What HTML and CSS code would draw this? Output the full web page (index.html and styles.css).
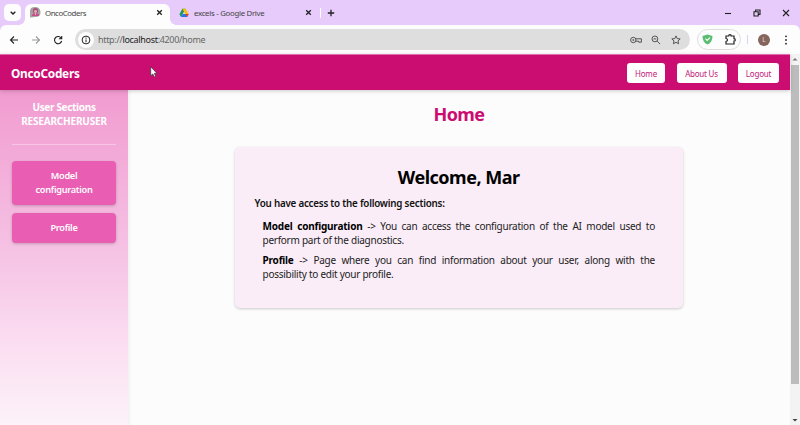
FILE: index.html
```html
<!DOCTYPE html>
<html lang="en">
<head>
<meta charset="utf-8">
<title>OncoCoders</title>
<link rel="stylesheet" href="styles.css">
</head>
<body>
<div class="tabs">
  <div class="chevron"><svg width="8" height="8" viewBox="0 0 8 8"><path d="M1.7 2.8 4 5l2.3-2.2"/></svg></div>
  <div class="tab active">
    <svg class="favicon" width="11" height="11" viewBox="0 0 11 11"><path d="M0 10.5V4Q0 0 5 0t5.500 5-5.500 5z" fill="#a9a0a6"/><circle cx="5.500" cy="3.700" r="2.600" fill="#a84f78"/><circle cx="5.500" cy="4.500" r="1.400" fill="#e0b5b5"/><path d="M2 9q0-3 3.500-3T9 9z" fill="#c64e84"/><path d="m4.500 6.500 1 1.500 1-1.500" fill="#eee"/></svg>
    <span class="tab-title t-onco">OncoCoders</span>
    <svg class="close" width="7" height="7" viewBox="0 0 7 7"><path d="m1.200 1.200 4.600 4.600m0-4.600L1.200 5.800"/></svg>
  </div>
  <div class="tab">
    <svg width="10" height="10" viewBox="0 0 10 10"><path d="M3.400.8h3.200L5 3.600 2 9 .4 6.200z" fill="#179d55"/><path d="M3.400.8h3.200L9.700 6H6.500z" fill="#fbbc05"/><path d="M3.600 6h6.100L8.100 9H2z" fill="#2c75e8"/><path d="M6.500 6h3.200L8.100 9z" fill="#e84335"/></svg>
    <span class="tab-title t-drive">excels - Google Drive</span>
    <svg class="close" width="7" height="7" viewBox="0 0 7 7"><path d="m1.200 1.200 4.600 4.600m0-4.600L1.200 5.800"/></svg>
  </div>
  <i class="divider"></i>
  <svg class="plus" width="8" height="8" viewBox="0 0 8 8"><path d="M4 .8v6.400M.8 4h6.400"/></svg>
  <div class="window-controls">
    <svg width="8" height="8" viewBox="0 0 8 8"><path d="M1 4.500h6"/></svg>
    <svg width="8" height="8" viewBox="0 0 8 8"><path d="M1 2.800h4.200V7H1zM2.600 2.800V1h4.400v4.400H5.200"/></svg>
    <svg width="8" height="8" viewBox="0 0 8 8"><path d="m1 1 6 6m0-6L1 7"/></svg>
  </div>
</div>
<div class="toolbar">
  <svg width="10" height="10" viewBox="0 0 10 10"><path d="M9 5H1.500M5 1.500 1.500 5 5 8.500"/></svg>
  <svg class="forward" width="10" height="10" viewBox="0 0 10 10"><path d="M1 5h7.500M5 1.500 8.500 5 5 8.500"/></svg>
  <svg width="10" height="10" viewBox="0 0 10 10"><path d="M8.300 3.400A3.600 3.600 0 1 0 8.600 6M8.700 1v2.800H5.900"/></svg>
  <div class="address">
    <span class="info"><svg width="10" height="10" viewBox="0 0 10 10"><circle cx="5" cy="5" r="3.900"/><path d="M5 4.500v2.700M5 2.600v1.100"/></svg></span>
    <span class="url">http://<b>localhost</b>:4200/home</span>
    <svg class="key" width="12" height="10" viewBox="0 0 12 10"><circle cx="3.300" cy="5" r="2.700"/><circle cx="3.300" cy="5" r=".6"/><path d="M5.700 3.800h5.700v3.400H8.700V6.200H5.700"/></svg>
    <svg width="10" height="10" viewBox="0 0 10 10"><circle cx="3.900" cy="3.900" r="2.900"/><path d="m6.100 6.100 3 3M2.500 3.900h2.800"/></svg>
    <svg width="10" height="10" viewBox="0 0 10 10"><path d="m5 .9 1.200 2.700 3 .3-2.200 2 .6 2.900L5 7.300 2.400 8.800 3 5.900l-2.200-2 3-.3z"/></svg>
  </div>
  <div class="extensions">
    <svg width="11" height="11" viewBox="0 0 11 11"><path d="M5.500.5 10.500 2c0 4-1.500 7-5 8.600C2 9 .5 6 .5 2z" fill="#5bbd72" stroke="none"/><path d="m3.500 4.700 1.600 1.700L8 3.700" stroke="#fff"/></svg>
    <svg width="11" height="11" viewBox="0 0 11 11"><path d="M1 2h2.700q0-1.300 1.200-1.300T6.100 2H9v2.700q1.300 0 1.300 1.200T9 7.100V10H1V7.500q1.500-.3 1.500-1.500T1 4.500z" stroke-width="1.200"/></svg>
  </div>
  <i class="bar"></i>
  <span class="avatar">L</span>
  <svg class="dots" width="4" height="10" viewBox="0 0 4 10"><circle cx="2" cy="1.300" r=".9"/><circle cx="2" cy="5" r=".9"/><circle cx="2" cy="8.700" r=".9"/></svg>
</div>
<div class="viewport">
  <div class="page">
    <header class="header">
      <span class="brand">OncoCoders</span>
      <nav class="nav"><a class="home">Home</a><a class="about">About Us</a><a class="logout">Logout</a></nav>
    </header>
    <div class="body">
      <aside class="sidebar">
        <h2>User Sections<br><span class="role">RESEARCHERUSER</span></h2>
        <a class="side-link">Model<br>configuration</a>
        <a class="side-link">Profile</a>
      </aside>
      <main class="main">
        <h1>Home</h1>
        <section class="card">
          <h2>Welcome, Mar</h2>
          <h3>You have access to the following sections:</h3>
          <p><strong>Model configuration</strong> -&gt; You can access the configuration of the AI model used to perform part of the diagnostics.</p>
          <p><strong>Profile</strong> -&gt; Page where you can find information about your user, along with the possibility to edit your profile.</p>
        </section>
      </main>
    </div>
  </div>
  <div class="scrollbar">
    <svg width="10" height="10" viewBox="0 0 10 10"><path d="m2.500 6.500L5 4l2.500 2.500z" fill="#777"/></svg>
    <div class="thumb"></div>
    <svg width="10" height="10" viewBox="0 0 10 10"><path d="M2.500 4 5 6.500 7.500 4z" fill="#444"/></svg>
  </div>
</div>
<svg class="cursor" width="8" height="12" viewBox="0 0 8 12"><path d="M.7.700v9L2.800 8l1.400 3 1.500-.7L4.300 7.400H7z"/></svg>
</body>
</html>
```
FILE: styles.css
```css
* { box-sizing: border-box; }
body {
  margin: 0;
  width: 800px;
  height: 425px;
  overflow: hidden;
  display: flex;
  flex-direction: column;
  font-family: "Noto Sans", "Open Sans", sans-serif;
  background: #e6cbfb;
  color: #111;
}
svg { flex: none; display: block; fill: none; stroke: #222; stroke-width: 1.1; }
.tabs { height: 25px; display: flex; align-items: center; flex: none; }
.chevron {
  width: 17px; height: 17px; margin-left: 4px; border-radius: 5px;
  background: #fdfdfd; display: grid; place-items: center;
}
.chevron svg { stroke-width: 1.4; }
.tab { display: flex; align-items: center; width: 150px; padding: 0 8px 0 9px; height: 21px; }
.tab svg:first-child { stroke: none; }
.tab.active {
  margin: 4px 0 0 4px; width: 145px; padding: 0 7px 4px 5px;
  background: #fdfdfd; border-radius: 6px 6px 0 0; position: relative;
}
.tab.active::before, .tab.active::after {
  content: ""; position: absolute; bottom: 0; width: 6px; height: 6px;
}
.tab.active::before { left: -6px; background: radial-gradient(circle at 0 0, transparent 5.500px, #fdfdfd 6px); }
.tab.active::after { right: -6px; background: radial-gradient(circle at 100% 0, transparent 5.500px, #fdfdfd 6px); }
.tab-title { flex: 1; white-space: nowrap; font-size: 7.800px; letter-spacing: -0.28px; color: #444; }
.t-onco { margin-left: 4px; letter-spacing: -0.400px; }
.t-drive { margin-left: 5px; }
.close { stroke-width: 1.3; }
.divider { width: 1px; height: 10px; background: #fff; }
.plus { margin-left: 6px; stroke-width: 1.3; }
.window-controls { margin-left: auto; display: flex; gap: 21px; padding-right: 10px; }
.toolbar {
  height: 29px; flex: none; background: #fdfdfd; border-radius: 6px 6px 0 0;
  display: flex; align-items: center; padding: 0 12px 0 9px;
}
.toolbar > svg { margin-right: 12px; }
.toolbar .forward { stroke: #999; }
.address {
  width: 616px; height: 21px; border-radius: 11px; background: #dedede;
  display: flex; align-items: center; gap: 10px; padding: 0 9px 0 3px;
}
.address svg { stroke: #555; stroke-width: 1; }
.info { width: 16px; height: 16px; border-radius: 50%; background: #fdfdfd; display: grid; place-items: center; }
.address .info svg { stroke: #222; }
.url { flex: 1; margin-left: -6px; font-size: 9px; letter-spacing: -0.320px; color: #666; }
.url b { font-weight: 400; color: #222; }
.address .key { margin-right: -1px; }
.extensions {
  margin-left: 7px; width: 44px; height: 21px; border: 1px solid #ddd; border-radius: 11px;
  display: flex; align-items: center; justify-content: space-between; padding: 0 4px;
}
.bar { width: 1px; height: 9px; background: #e2d0f2; margin-left: 6px; }
.avatar {
  margin-left: 10px; width: 12px; height: 12px; border-radius: 50%;
  background: #85665c; color: #e7ddda; font-size: 6.500px; line-height: 12px; text-align: center;
}
.toolbar .dots { margin: 0 0 0 14px; fill: #222; stroke: none; }
.viewport { flex: 1; display: flex; min-height: 0; }
.page { width: 790px; display: flex; flex-direction: column; background: #fcfcfc; }
.header {
  height: 36px; flex: none; background: #cb0c71; border-top: 1px solid #df70ab;
  display: flex; align-items: center;
  justify-content: space-between; padding: 1px 11px 0; position: relative;
  box-shadow: 0 1px 4px #0003;
}
.brand { font-size: 11.800px; letter-spacing: -0.250px; font-weight: 700; color: #fff; }
.nav { display: flex; gap: 11.500px; }
.nav a {
  height: 20.500px; line-height: 21px; border-radius: 3px; background: #fefefe;
  color: #c42078; font-size: 8px; letter-spacing: -0.220px; text-align: center;
}
.home { width: 38px; }
.about { width: 50px; }
.logout { width: 41px; }
.body { flex: 1; display: flex; min-height: 0; }
.sidebar {
  width: 128px; flex: none; padding: 10px 12px; text-align: center; color: #fff;
  background: linear-gradient(#f19bd0, #f5c2e4 48%, #fbddf1 75%, #fcf2f9);
  box-shadow: 1px 0 4px #0001;
}
.sidebar h2 {
  margin: 0 0 16px; height: 45px; border-bottom: 1px solid #f8c5e5;
  font-size: 10px; letter-spacing: -0.320px; line-height: 14px;
}
.role { letter-spacing: -0.180px; }
.side-link {
  display: block; margin-bottom: 8px; padding: 8px 0; border-radius: 4px;
  background: #e95db3; font-size: 9.200px; letter-spacing: -0.3px; line-height: 14px; font-weight: 600;
  box-shadow: 0 1px 3px #0003;
}
.main { flex: 1; }
h1 { margin: 10.500px 0 0; font-size: 18px; letter-spacing: -0.550px; line-height: 26px; color: #cb0c71; text-align: center; }
.card {
  width: 448.500px; height: 161px; margin: 20.500px 0 0 106.500px; padding: 17px 20px;
  background: #faedf8; border-radius: 5px; box-shadow: 0 1px 3px #0003;
}
.card h2 { margin: 0; font-size: 18px; letter-spacing: -0.480px; line-height: 27px; text-align: center; color: #000; }
.card h3 { margin: 6px 0 8px; font-size: 9.800px; letter-spacing: -0.220px; line-height: 14px; font-weight: 600; color: #111; }
.card p { margin: 0 8px 6px; font-size: 10px; letter-spacing: -0.260px; line-height: 14px; text-align: justify; color: #222; }
.card strong { color: #000; letter-spacing: -0.200px; }
.scrollbar { width: 10px; background: #f3f3f3; display: flex; flex-direction: column; }
.scrollbar svg { stroke: none; }
.thumb { height: 319px; margin: 1px 1px auto; background: #bcbcbc; }
.cursor { position: absolute; left: 150px; top: 66px; fill: #fff; stroke: #333; stroke-width: .7; }
```
